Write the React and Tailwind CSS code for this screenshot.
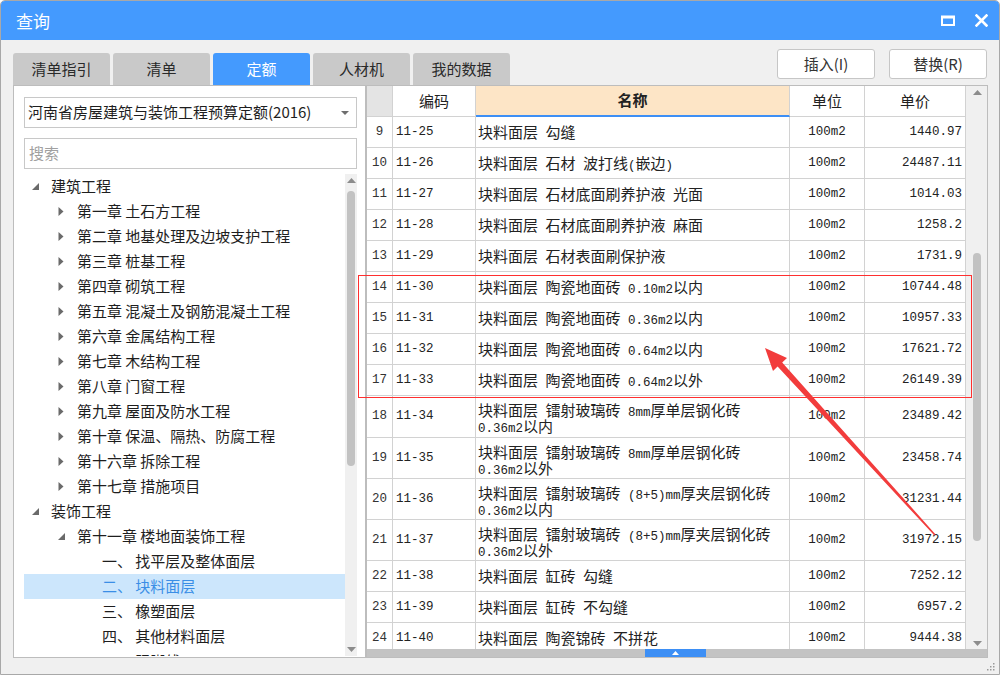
import React from "react";

const rows = [
  [9, "11-25", ["块料面层 勾缝"], "1440.97"],
  [10, "11-26", ["块料面层 石材 波打线(嵌边)"], "24487.11"],
  [11, "11-27", ["块料面层 石材底面刷养护液 光面"], "1014.03"],
  [12, "11-28", ["块料面层 石材底面刷养护液 麻面"], "1258.2"],
  [13, "11-29", ["块料面层 石材表面刷保护液"], "1731.9"],
  [14, "11-30", ["块料面层 陶瓷地面砖 0.10m2以内"], "10744.48"],
  [15, "11-31", ["块料面层 陶瓷地面砖 0.36m2以内"], "10957.33"],
  [16, "11-32", ["块料面层 陶瓷地面砖 0.64m2以内"], "17621.72"],
  [17, "11-33", ["块料面层 陶瓷地面砖 0.64m2以外"], "26149.39"],
  [18, "11-34", ["块料面层 镭射玻璃砖 8mm厚单层钢化砖", "0.36m2以内"], "23489.42"],
  [19, "11-35", ["块料面层 镭射玻璃砖 8mm厚单层钢化砖", "0.36m2以外"], "23458.74"],
  [20, "11-36", ["块料面层 镭射玻璃砖 (8+5)mm厚夹层钢化砖", "0.36m2以内"], "31231.44"],
  [21, "11-37", ["块料面层 镭射玻璃砖 (8+5)mm厚夹层钢化砖", "0.36m2以外"], "31972.15"],
  [22, "11-38", ["块料面层 缸砖 勾缝"], "7252.12"],
  [23, "11-39", ["块料面层 缸砖 不勾缝"], "6957.2"],
  [24, "11-40", ["块料面层 陶瓷锦砖 不拼花"], "9444.38"],
];

const tree = [
  { t: "建筑工程", lv: 0, a: "open" },
  { t: "第一章 土石方工程", lv: 1, a: "closed" },
  { t: "第二章 地基处理及边坡支护工程", lv: 1, a: "closed" },
  { t: "第三章 桩基工程", lv: 1, a: "closed" },
  { t: "第四章 砌筑工程", lv: 1, a: "closed" },
  { t: "第五章 混凝土及钢筋混凝土工程", lv: 1, a: "closed" },
  { t: "第六章 金属结构工程", lv: 1, a: "closed" },
  { t: "第七章 木结构工程", lv: 1, a: "closed" },
  { t: "第八章 门窗工程", lv: 1, a: "closed" },
  { t: "第九章 屋面及防水工程", lv: 1, a: "closed" },
  { t: "第十章 保温、隔热、防腐工程", lv: 1, a: "closed" },
  { t: "第十六章 拆除工程", lv: 1, a: "closed" },
  { t: "第十七章 措施项目", lv: 1, a: "closed" },
  { t: "装饰工程", lv: 0, a: "open" },
  { t: "第十一章 楼地面装饰工程", lv: 1, a: "open" },
  { t: "一、 找平层及整体面层", lv: 2 },
  { t: "二、 块料面层", lv: 2, sel: true },
  { t: "三、 橡塑面层", lv: 2 },
  { t: "四、 其他材料面层", lv: 2 },
  { t: "五、 踢脚线", lv: 2 },
];

const MONO = "font-['Liberation_Mono','Noto_Sans_CJK_SC',monospace] text-[12.5px]";

function Mixed({ text }) {
  const parts = text.split(/([\x20-\x7e]+)/).filter((p) => p.length);
  return (
    <>
      {parts.map((p, i) =>
        /^[\x20-\x7e]+$/.test(p) ? (
          <span key={i} className={"whitespace-pre " + MONO}>
            {p}
          </span>
        ) : (
          <span key={i} className="text-[15px]">
            {p}
          </span>
        )
      )}
    </>
  );
}

function Closed() {
  return (
    <svg width="6" height="9" viewBox="0 0 6 9">
      <polygon points="0.5,0 5.5,4.5 0.5,9" fill="#6a6a6a" />
    </svg>
  );
}
function Open() {
  return (
    <svg width="7" height="7" viewBox="0 0 7 7">
      <polygon points="7,0 7,7 0,7" fill="#6a6a6a" />
    </svg>
  );
}
function Up({ c = "#8c8c8c" }) {
  return (
    <svg width="9" height="5" viewBox="0 0 9 5">
      <polygon points="0,5 4.5,0 9,5" fill={c} />
    </svg>
  );
}
function Down({ c = "#8c8c8c" }) {
  return (
    <svg width="9" height="5" viewBox="0 0 9 5">
      <polygon points="0,0 9,0 4.5,5" fill={c} />
    </svg>
  );
}

function TreeItem({ item }) {
  const pad =
    item.lv === 0 ? "pl-[8px]" : item.lv === 1 ? "pl-[34px]" : "pl-[78px]";
  return (
    <div
      className={
        "h-[25px] flex items-center shrink-0 whitespace-nowrap " +
        pad +
        (item.sel ? " bg-[#cce6fc] text-[#3a8ee6]" : " text-[#1e1e1e]")
      }
    >
      {item.a && (
        <div className="w-[19px] h-[25px] flex items-center">
          {item.a === "open" ? <Open /> : <Closed />}
        </div>
      )}
      <span className="text-[15px]">{item.t}</span>
    </div>
  );
}

export default function App() {
  const c = "border-r border-b border-[#d2d2d2]";
  return (
    <div className="relative w-[1000px] h-[675px] overflow-hidden bg-[#f0f0f0] border border-[#a8a8a8] rounded-t-[5px] flex flex-col font-['Noto_Sans_CJK_SC',sans-serif] text-[#222]">
      {/* title bar */}
      <div className="h-[39px] shrink-0 bg-[#449afe] flex items-center justify-between pl-[15px] pr-[11px]">
        <span className="text-white text-[17px]">查询</span>
        <div className="flex items-center gap-[20px]">
          <svg width="14" height="11" viewBox="0 0 14 11">
            <rect x="1" y="1.5" width="12" height="8.5" fill="none" stroke="#fff" strokeWidth="2" />
            <rect x="1" y="1" width="12" height="2.5" fill="#fff" />
          </svg>
          <svg width="13" height="13" viewBox="0 0 13 13">
            <path d="M1.5 1.5 L11.5 11.5 M11.5 1.5 L1.5 11.5" stroke="#fff" strokeWidth="2.6" strokeLinecap="square" />
          </svg>
        </div>
      </div>

      {/* toolbar */}
      <div className="h-[45px] shrink-0 flex justify-between pl-[12px] pr-[12px]">
        <div className="flex gap-[3px] self-end">
          {["清单指引", "清单", "定额", "人材机", "我的数据"].map((t) => (
            <div
              key={t}
              className={
                "w-[97px] h-[32px] rounded-t-[3px] flex items-center justify-center text-[15px] " +
                (t === "定额" ? "bg-[#449afe] text-white" : "bg-[#c9c9c9] text-[#2a2a2a]")
              }
            >
              {t}
            </div>
          ))}
        </div>
        <div className="flex gap-[14px] mt-[9px]">
          {["插入(I)", "替换(R)"].map((t) => (
            <div
              key={t}
              className="w-[98px] h-[30px] bg-white border border-[#c6c6c6] rounded-[3px] flex items-center justify-center text-[15px] text-[#333]"
            >
              {t}
            </div>
          ))}
        </div>
      </div>

      {/* main */}
      <div className="h-[573px] shrink-0 flex pl-[12px] pr-[11px]">
        {/* left panel */}
        <div className="w-[353px] shrink-0 bg-white border border-[#bdbdbd] flex flex-col pt-[11px] pl-[10px] pr-[8px] pb-[1px]">
          <div className="h-[31px] shrink-0 border border-[#c8c8c8] flex items-center justify-between pl-[3px] pr-[7px]">
            <span className="text-[15px] text-[#1e1e1e] whitespace-nowrap">河南省房屋建筑与装饰工程预算定额(2016)</span>
            <svg width="8" height="4" viewBox="0 0 8 4">
              <polygon points="0,0 8,0 4,4" fill="#6e6e6e" />
            </svg>
          </div>
          <div className="mt-[10px] h-[31px] shrink-0 border border-[#c8c8c8] flex items-center pl-[4px]">
            <span className="text-[15px] text-[#a0a0a0]">搜索</span>
          </div>
          <div className="mt-[5px] flex-1 flex overflow-hidden">
            <div className="flex-1 flex flex-col overflow-hidden">
              {tree.map((it, i) => (
                <TreeItem key={i} item={it} />
              ))}
            </div>
            <div className="w-[12px] shrink-0 bg-[#f0f0f0] flex flex-col items-center pt-[4px] pb-[4px]">
              <Up />
              <div className="mt-[8px] w-[8px] h-[275px] rounded-[4px] bg-[#c2c2c2]" />
              <div className="flex-1" />
              <Down />
            </div>
          </div>
        </div>

        {/* right panel */}
        <div className="flex-1 border border-[#bdbdbd] bg-[#f0f0f0] flex flex-col">
          <div className="flex-1 flex overflow-hidden">
            <div className="w-[599px] shrink-0 bg-white flex flex-col overflow-hidden">
              {/* header */}
              <div className="h-[31px] shrink-0 flex text-[15px]">
                <div className={"w-[26px] shrink-0 bg-[#e4e4e4] " + c} />
                <div className={"w-[83px] shrink-0 flex items-center justify-center " + c}>编码</div>
                <div className="w-[314px] shrink-0 flex items-center justify-center font-bold bg-[#fde5c6] border-r border-[#d2d2d2] border-b-2 border-b-[#3d8ff5]">
                  名称
                </div>
                <div className={"w-[75px] shrink-0 flex items-center justify-center " + c}>单位</div>
                <div className={"w-[101px] shrink-0 flex items-center justify-center " + c}>单价</div>
              </div>
              {rows.map(([n, code, name, price], idx) => {
                const two = name.length > 1;
                return (
                  <div
                    key={n}
                    className={
                      "shrink-0 flex " +
                      (two ? (idx === 9 ? "h-[42px]" : "h-[41px]") : "h-[31px]")
                    }
                  >
                    <div className={"w-[26px] shrink-0 flex items-center justify-center text-[#333] " + MONO + " " + c}>
                      {n}
                    </div>
                    <div className={"w-[83px] shrink-0 flex items-center pl-[3px] " + MONO + " " + c}>{code}</div>
                    <div
                      className={
                        "w-[314px] shrink-0 flex flex-col pl-[2px] whitespace-nowrap overflow-hidden " +
                        (two ? "justify-start pt-[5px] " : "justify-center ") +
                        c
                      }
                    >
                      {name.map((l, i) => (
                        <div key={i} className={two ? "h-[16px] leading-[16px]" : ""}>
                          <Mixed text={l} />
                        </div>
                      ))}
                    </div>
                    <div className={"w-[75px] shrink-0 flex items-center justify-center " + MONO + " " + c}>100m2</div>
                    <div className={"w-[101px] shrink-0 flex items-center justify-end pr-[3px] " + MONO + " " + c}>{price}</div>
                  </div>
                );
              })}
            </div>
            {/* vertical scrollbar */}
            <div className="flex-1 bg-[#f0f0f0] flex flex-col items-center pt-[4px] pb-[3px] pl-[1px]">
              <Up />
              <div className="mt-[158px] w-[8px] h-[288px] rounded-[4px] bg-[#c2c2c2]" />
              <div className="flex-1" />
              <Down />
            </div>
          </div>
          {/* horizontal bar */}
          <div className="h-[8px] shrink-0 bg-[#c3c3c3] flex">
            <div className="ml-[278px] w-[61px] h-[8px] bg-[#3d8ff5] flex items-center justify-center">
              <svg width="7" height="4" viewBox="0 0 7 4">
                <polygon points="0,4 3.5,0 7,4" fill="#fff" />
              </svg>
            </div>
          </div>
        </div>
      </div>

      {/* resize grip */}
      <svg className="absolute right-[4px] bottom-[3px]" width="9" height="9" viewBox="0 0 9 9">
        <rect x="7" y="1" width="1.5" height="1.5" fill="#9a9a9a" />
        <rect x="4" y="4" width="1.5" height="1.5" fill="#9a9a9a" />
        <rect x="7" y="4" width="1.5" height="1.5" fill="#9a9a9a" />
        <rect x="1" y="7" width="1.5" height="1.5" fill="#9a9a9a" />
        <rect x="4" y="7" width="1.5" height="1.5" fill="#9a9a9a" />
        <rect x="7" y="7" width="1.5" height="1.5" fill="#9a9a9a" />
      </svg>

      {/* red highlight box */}
      <div className="absolute left-[357px] top-[274px] w-[614px] h-[123px] border border-[#ff2f2f] pointer-events-none" />

      {/* red arrow */}
      <svg
        className="absolute left-[-1px] top-[-1px] pointer-events-none"
        width="1000"
        height="675"
        viewBox="0 0 1000 675"
      >
        <polygon
          points="765,348 787,358 782.2,362.5 935.6,534.4 934.4,535.6 777.6,366.6 773,371"
          fill="#f23c3c"
        />
      </svg>
    </div>
  );
}
